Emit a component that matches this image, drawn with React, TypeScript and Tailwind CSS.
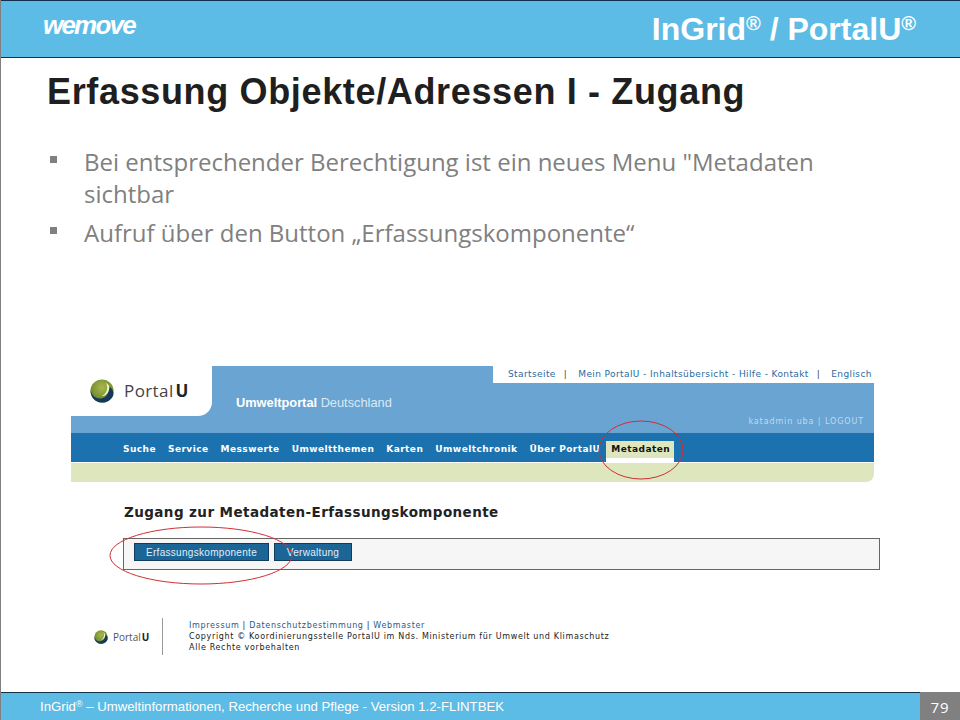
const verdana = "font-['DejaVu_Sans',sans-serif]";

function Globe({ size, id }: { size: number; id: string }) {
  return (
    <svg width={size} height={size} viewBox="0 0 26 26">
      <defs>
        <radialGradient id={id} cx="0.5" cy="0.35" r="0.7">
          <stop offset="0" stopColor="#a9b84e" />
          <stop offset="0.6" stopColor="#7c9431" />
          <stop offset="1" stopColor="#4e6a2c" />
        </radialGradient>
      </defs>
      <circle cx="13" cy="13" r="12.5" fill={`url(#${id})`} />
      <path d="M0.6 12 C2 20 9 22.5 14 20.5 C19 18.5 21 14 20 7 C24 10 26 14 25.4 17 C23.5 23 18 25.6 13 25.5 C6 25.5 0.5 20 0.6 12 Z" fill="#14395a" />
      <path d="M17 4 C20 8 19 15 13 18.5 C17 18.5 21.5 14 21 8 C20 6 18.5 5 17 4 Z" fill="#eef3c8" />
    </svg>
  );
}

const navItems = ["Suche", "Service", "Messwerte", "Umweltthemen", "Karten", "Umweltchronik", "Über PortalU"];

function PortalShot() {
  return (
    <div className={`ml-[70px] mt-[117px] w-[803px] ${verdana}`}>
      <div className="flex h-[67px] bg-[#69a4d2]">
        <div className="flex h-[50px] w-[141px] items-center gap-[10px] rounded-br-[14px] bg-white pl-[19px] pb-[1px]">
          <Globe size={24} id="globeLarge" />
          <span className="font-['Open_Sans',sans-serif] text-[17px] leading-none tracking-[0.4px] text-[#444]">
            Portal<b className="ml-[2px] text-[#222]">U</b>
          </span>
        </div>
        <div className="w-[281px] pl-[24px] pt-[30px] font-['Liberation_Sans',sans-serif] text-[12.8px] leading-[14px] text-white">
          <b>Umweltportal</b> <span className="text-[#dbe8f4]">Deutschland</span>
        </div>
        <div className="flex flex-1 flex-col">
          <div className="flex h-[17px] items-center gap-[8px] bg-white pl-[15px] text-[9px] tracking-[0.4px] text-[#2a6aa0]">
            <span>Startseite</span>
            <span className="text-[#444]">|</span>
            <span className="ml-[3px]">Mein PortalU - Inhaltsübersicht - Hilfe - Kontakt</span>
            <span className="text-[#444]">|</span>
            <span className="ml-[3px]">Englisch</span>
          </div>
          <div className="mt-[33px] pr-[10px] text-right text-[8px] leading-[12px] tracking-[0.9px] text-[#c3d9ec]">
            katadmin uba | LOGOUT
          </div>
        </div>
      </div>
      <div className="flex h-[29px] items-start bg-[#1c72ae] pl-[52px] text-[9px] font-bold tracking-[0.45px] text-white">
        <div className="flex gap-[12px] pt-[11px] leading-[11px]">
          {navItems.map((item) => (
            <span key={item}>{item}</span>
          ))}
        </div>
        <div className="ml-[6px] mt-[8px] h-[21px] w-[68px] border-b-[4px] border-white bg-[#dde6bc] pl-[5px] pt-[3px] leading-[11px] text-[#111]">
          Metadaten
        </div>
      </div>
      <div className="mt-[1px] h-[19px] rounded-br-[8px] bg-[#dde6bc]" />
    </div>
  );
}

function SmallLogo() {
  return (
    <div className="flex w-[68px] items-center gap-[5px]">
      <Globe size={14} id="globeSmall" />
      <span className="font-['Open_Sans',sans-serif] text-[10px] leading-none text-[#555]">
        Portal<b className="ml-[1px] text-[#222]">U</b>
      </span>
    </div>
  );
}

export default function App() {
  return (
    <div className="relative flex h-[720px] w-[960px] flex-col overflow-hidden border-l border-[#808080] bg-white">
      <header className="flex h-[58px] shrink-0 items-start justify-between border-y border-[#12304a] bg-[#5cbce6] pl-[42px] pr-[44px] text-white">
        <span className="mt-[9px] font-['Liberation_Sans',sans-serif] text-[26px] font-bold italic leading-[30px] tracking-[-1.8px]">
          wemove
        </span>
        <span className="mt-[10px] font-['Liberation_Sans',sans-serif] text-[32px] font-bold leading-[36px]">
          InGrid<sup className="text-[20px]">®</sup> / PortalU<sup className="text-[20px]">®</sup>
        </span>
      </header>

      <main className="flex-1">
        <h1 className="ml-[46px] mt-[14px] font-['Liberation_Sans',sans-serif] text-[36px] font-bold leading-[40px] tracking-[0.65px] text-[#1f1f1f]">
          Erfassung Objekte/Adressen I - Zugang
        </h1>

        <ul className="ml-[49px] mt-[34px] font-['Open_Sans',sans-serif] text-[24px] font-normal leading-[32px] text-[#808080]">
          <li className="flex">
            <span className="mr-[27px] mt-[10px] h-[7px] w-[7px] shrink-0 bg-[#808080]" />
            <span className="w-[760px]">Bei entsprechender Berechtigung ist ein neues Menu "Metadaten sichtbar</span>
          </li>
          <li className="mt-[7px] flex">
            <span className="mr-[27px] mt-[10px] h-[7px] w-[7px] shrink-0 bg-[#808080]" />
            <span>Aufruf über den Button „Erfassungskomponente“</span>
          </li>
        </ul>

        <PortalShot />

        <div className={`ml-[122px] mt-[21px] w-[757px] ${verdana}`}>
          <h2 className="ml-[1px] text-[13.5px] font-bold leading-[18px] tracking-[0.42px] text-[#222]">
            Zugang zur Metadaten-Erfassungskomponente
          </h2>
          <div className="mt-[17px] flex h-[32px] gap-[5px] border border-[#666] bg-[#f6f6f6] pl-[10px] pt-[4px] font-['Liberation_Sans',sans-serif] text-[10px] tracking-[0.3px] text-[#e4eef6]">
            <span className="flex h-[18px] w-[135px] items-center justify-center border border-[#123c5c] bg-[#1b6597]">Erfassungskomponente</span>
            <span className="flex h-[18px] w-[78px] items-center justify-center border border-[#123c5c] bg-[#1b6597]">Verwaltung</span>
          </div>
        </div>

        <div className={`ml-[93px] mt-[48px] flex items-center ${verdana}`}>
          <SmallLogo />
          <div className="h-[37px] w-px bg-[#999]" />
          <div className="ml-[26px] text-[8px] leading-[11px] tracking-[0.66px] text-[#222]">
            <p className="text-[#2a5a85]">
              Impressum <span className="text-[#222]">|</span> Datenschutzbestimmung <span className="text-[#222]">|</span> Webmaster
            </p>
            <p>Copyright © Koordinierungsstelle PortalU im Nds. Ministerium für Umwelt und Klimaschutz</p>
            <p>Alle Rechte vorbehalten</p>
          </div>
        </div>
      </main>

      <footer className="flex h-[28px] shrink-0">
        <div className="flex-1 border-t border-[#12304a] bg-[#5cbce6] pl-[39px] pt-[6px] font-['Liberation_Sans',sans-serif] text-[13.2px] leading-[16px] text-white">
          InGrid<sup className="text-[9px]">®</sup> – Umweltinformationen, Recherche und Pflege - Version 1.2-FLINTBEK
        </div>
        <div className="flex w-[40px] items-center justify-center bg-[#808080] pt-[2px] font-['Open_Sans',sans-serif] text-[15px] tracking-[1px] text-white">
          79
        </div>
      </footer>

      <svg className="absolute left-0 top-0" width="960" height="720" fill="none" stroke="#cf2f35" strokeWidth="1">
        <ellipse cx="640" cy="450" rx="42" ry="29" />
        <ellipse cx="200" cy="555.5" rx="91" ry="28.5" />
      </svg>
    </div>
  );
}
